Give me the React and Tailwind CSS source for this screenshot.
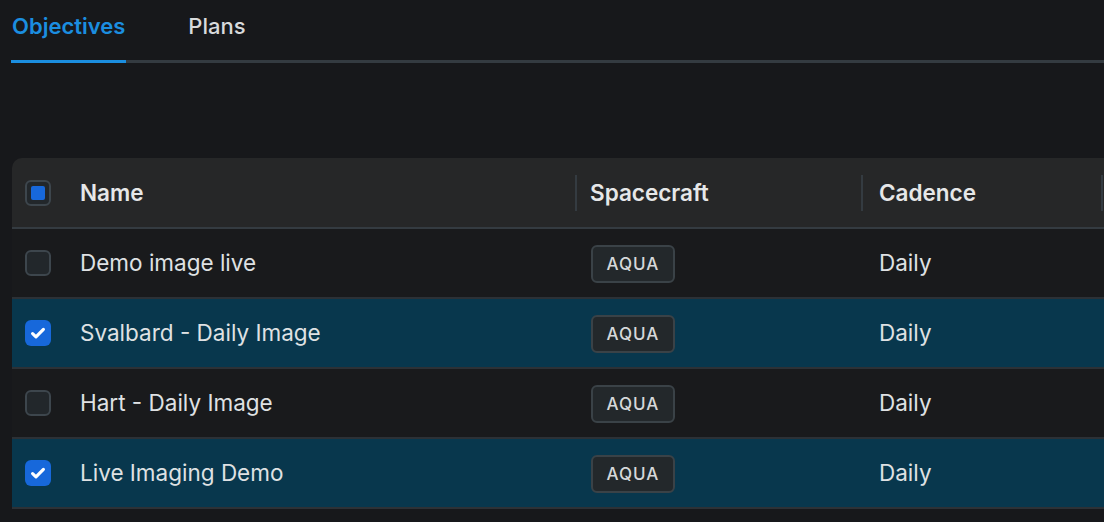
import { useState } from 'react';

const rows = [
  { id: 1, name: 'Demo image live', spacecraft: 'AQUA', cadence: 'Daily', selected: false },
  { id: 2, name: 'Svalbard - Daily Image', spacecraft: 'AQUA', cadence: 'Daily', selected: true },
  { id: 3, name: 'Hart - Daily Image', spacecraft: 'AQUA', cadence: 'Daily', selected: false },
  { id: 4, name: 'Live Imaging Demo', spacecraft: 'AQUA', cadence: 'Daily', selected: true },
];

function Checkbox({ state }) {
  if (state === 'checked') {
    return (
      <div className="w-[26px] h-[26px] rounded-[6px] bg-[#1768db] flex items-center justify-center">
        <svg width="18" height="18" viewBox="0 0 16 16" fill="none">
          <path d="M3.2 8.6l3 2.9L12.8 4.8" stroke="white" strokeWidth="2.8" strokeLinecap="round" strokeLinejoin="round" />
        </svg>
      </div>
    );
  }
  if (state === 'mixed') {
    return (
      <div className="w-[26px] h-[26px] rounded-[6px] border-2 border-[#3d464d] bg-[#22272b] flex items-center justify-center">
        <div className="w-[14px] h-[14px] rounded-[2px] bg-[#1768db]" />
      </div>
    );
  }
  return <div className="w-[26px] h-[26px] rounded-[6px] border-2 border-[#3d464d] bg-[#22272b]" />;
}

export default function App() {
  const [tab, setTab] = useState('objectives');

  return (
    <div className="w-[1104px] h-[522px] bg-[#17181b] overflow-hidden text-[#e4e6e8]" style={{ fontFamily: 'Inter, "Noto Sans", sans-serif' }}>
      {/* TABS */}
      <div className="ml-[11px] flex border-b-[3px] border-[#343b41] h-[63px]">
        <button
          onClick={() => setTab('objectives')}
          className={`pb-[7px] px-[1px] text-[22px] font-semibold -mb-[3px] border-b-[3px] ${tab === 'objectives' ? 'text-[#1b8ee0] border-[#1b8ee0]' : 'text-[#d8dadc] border-transparent'}`}
        >
          Objectives
        </button>
        <button
          onClick={() => setTab('plans')}
          className={`ml-[61px] pb-[7px] px-[1px] text-[22px] font-medium -mb-[3px] border-b-[3px] ${tab === 'plans' ? 'text-[#1b8ee0] border-[#1b8ee0]' : 'text-[#d8dadc] border-transparent'}`}
        >
          Plans
        </button>
      </div>

      {/* TABLE */}
      <div className="ml-[12px] mt-[95px] rounded-tl-[10px] overflow-hidden">
        <div className="flex items-center h-[71px] bg-[#262728] border-b-2 border-[#343b41] text-[22.5px] font-semibold text-[#e6e7e8]">
          <div className="w-[68px] pl-[13px] flex items-center">
            <Checkbox state="mixed" />
          </div>
          <div className="w-[495px] flex items-center h-full">Name</div>
          <div className="w-[286px] flex items-center h-[36px] border-l-2 border-[#343b41] pl-[13px]">Spacecraft</div>
          <div className="w-[240px] flex items-center h-[36px] border-l-2 border-[#343b41] pl-[16px]">Cadence</div>
          <div className="flex-1 h-[36px] border-l-2 border-[#343b41]" />
        </div>
        {rows.map((r) => (
          <div
            key={r.id}
            className={`flex items-center h-[70px] border-b-2 border-[#2c3136] text-[22.5px] text-[#dfe1e3] ${r.selected ? 'bg-[#08374d]' : 'bg-[#191a1c]'}`}
          >
            <div className="w-[68px] pl-[13px] flex items-center">
              <Checkbox state={r.selected ? 'checked' : 'none'} />
            </div>
            <div className="w-[511px]">{r.name}</div>
            <div className="w-[288px] pt-[2px]">
              <span className="inline-flex items-center justify-center w-[84px] h-[38px] rounded-[6px] border-2 border-[#3a4247] bg-[#23282b] text-[17px] font-medium tracking-[0.06em] text-[#d6d8da]">
                {r.spacecraft}
              </span>
            </div>
            <div>{r.cadence}</div>
          </div>
        ))}
      </div>
    </div>
  );
}
